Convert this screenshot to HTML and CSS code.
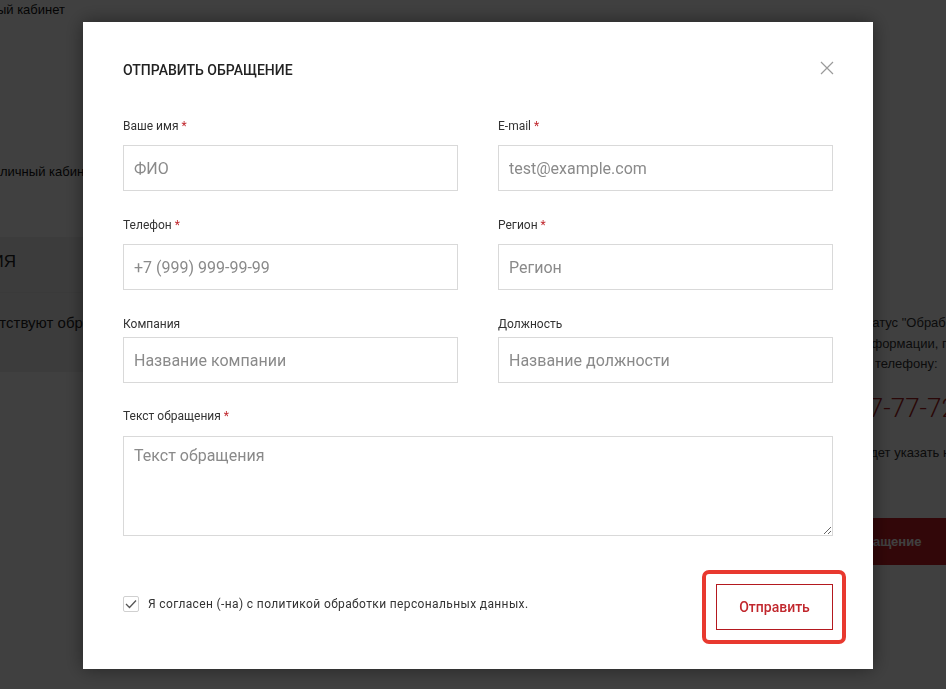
FILE: index.html
```html
<!DOCTYPE html>
<html lang="ru">
<head>
    <meta charset="UTF-8">
    <title>Отправить обращение</title>
    <link rel="stylesheet" href="styles.css">
</head>
<body>
    <div class="page">
        <div class="topbar">
            <div class="clip-left clip-top">Личный кабинет</div>
        </div>
        <div class="intro">личный кабинет</div>
        <div class="content">
            <div class="main">
                <div class="band-head">
                    <div class="clip-left clip-head">ОБРАЩЕНИЯ</div>
                </div>
                <div class="band-body">
                    <div class="clip-body"><span class="band-text">Отсутствуют обращения</span></div>
                </div>
            </div>
            <div class="aside">
                <p class="aside-line">Статус "Обработано" присваивается</p>
                <p class="aside-line">информации, пожалуйста,</p>
                <p class="aside-line">по телефону:</p>
                <p class="aside-phone">777-77-72</p>
                <p class="aside-note">будет указать номер обращения</p>
                <div class="aside-btn">обращение</div>
            </div>
        </div>
    </div>

    <div class="overlay">
        <div class="modal">
            <div class="modal-head">
                <div class="modal-title">Отправить обращение</div>
                <div class="modal-close">
                    <svg width="14" height="14" viewBox="0 0 14 14">
                        <path d="M1 1L13 13M13 1L1 13" stroke="#9a9a9a" stroke-width="1.2" fill="none"/>
                    </svg>
                </div>
            </div>

            <form class="form">
                <div class="field">
                    <label class="label">Ваше имя <span class="req">*</span></label>
                    <input class="input" type="text" placeholder="ФИО">
                </div>
                <div class="field">
                    <label class="label">E-mail <span class="req">*</span></label>
                    <input class="input" type="text" placeholder="test@example.com">
                </div>
                <div class="field">
                    <label class="label">Телефон <span class="req">*</span></label>
                    <input class="input" type="text" placeholder="+7 (999) 999-99-99">
                </div>
                <div class="field">
                    <label class="label">Регион <span class="req">*</span></label>
                    <input class="input" type="text" placeholder="Регион">
                </div>
                <div class="field field-short">
                    <label class="label">Компания</label>
                    <input class="input" type="text" placeholder="Название компании">
                </div>
                <div class="field field-short">
                    <label class="label">Должность</label>
                    <input class="input" type="text" placeholder="Название должности">
                </div>
                <div class="field field-wide">
                    <label class="label">Текст обращения <span class="req">*</span></label>
                    <textarea class="textarea" placeholder="Текст обращения"></textarea>
                </div>

                <div class="form-foot">
                    <label class="agree">
                        <span class="check">
                            <svg width="12" height="10" viewBox="0 0 12 10">
                                <path d="M1 5L4.5 8.5L11 1.5" stroke="#555" stroke-width="1.3" fill="none"/>
                            </svg>
                        </span>
                        Я согласен (-на) с политикой обработки персональных данных.
                    </label>
                    <div class="highlight">
                        <button class="submit" type="button">Отправить</button>
                    </div>
                </div>
            </form>
        </div>
    </div>
</body>
</html>
```

FILE: styles.css
```css
*{
    padding: 0;
    margin: 0;
    box-sizing: border-box;
}
html, body{
    height: 100%;
    overflow: hidden;
}
body{
    font-family: Roboto, "Noto Sans", sans-serif;
    color: #333;
    background: #fff;
}

/* page under the overlay */
.page{
    font-family: "Liberation Sans", Arial, sans-serif;
}
.topbar{
    height: 20px;
}
.clip-left{
    display: flex;
    justify-content: flex-end;
    overflow: hidden;
    white-space: nowrap;
}
.clip-top{
    width: 65px;
    font-size: 13px;
    line-height: 20px;
    color: #111;
}
.intro{
    margin-top: 142px;
    font-size: 13px;
    line-height: 20px;
    color: #111;
    white-space: nowrap;
}
.content{
    display: flex;
    align-items: flex-start;
    margin-top: 55px;
}
.main{
    width: 857px;
    flex-shrink: 0;
    background: #f0f0f0;
}
.band-head{
    height: 56px;
    display: flex;
    align-items: center;
    border-bottom: 1px solid #e8e8e8;
    padding-bottom: 6px;
}
.clip-head{
    width: 16px;
    font-size: 17px;
    color: #222;
}
.band-body{
    height: 79px;
    padding-top: 21px;
}
.clip-body{
    width: 83px;
    overflow: hidden;
    white-space: nowrap;
    font-size: 15px;
    color: #222;
}
.band-text{
    display: inline-block;
    margin-left: -34px;
}
.aside{
    white-space: nowrap;
    padding-top: 76px;
    font-size: 13px;
    color: #333;
}
.aside-line{
    line-height: 20.5px;
}
.aside-phone{
    margin-top: 16px;
    margin-left: -17px;
    font-family: Roboto, sans-serif;
    font-weight: 300;
    font-size: 26px;
    line-height: 34px;
    color: #a81c20;
}
.aside-note{
    margin-top: 18px;
    line-height: 20px;
}
.aside-btn{
    margin-top: 55px;
    margin-left: -20px;
    height: 47px;
    width: 200px;
    padding-left: 12px;
    background: #c81d24;
    color: #fff;
    font-weight: bold;
    font-size: 13px;
    line-height: 47px;
}

/* overlay and modal */
.overlay{
    position: fixed;
    top: 0;
    left: 0;
    right: 0;
    bottom: 0;
    background: rgba(0,0,0,.75);
    padding: 22px 0 0 83px;
}
.modal{
    width: 790px;
    height: 647px;
    background: #fff;
    padding: 38px 40px 25px;
    box-shadow: 0 0 18px rgba(0,0,0,.45);
}
.modal-head{
    display: flex;
    justify-content: space-between;
    align-items: center;
    margin-bottom: 38px;
}
.modal-title{
    font-size: 14px;
    line-height: 20px;
    font-weight: 500;
    text-transform: uppercase;
    color: #222;
}
.modal-close{
    width: 14px;
    height: 14px;
    margin-right: -1px;
    margin-top: -4px;
    cursor: pointer;
}
.modal-close svg{
    display: block;
}

.form{
    display: grid;
    grid-template-columns: 1fr 1fr;
    column-gap: 40px;
}
.field{
    display: flex;
    flex-direction: column;
    margin-bottom: 26px;
}
.field-short{
    margin-bottom: 25px;
}
.field-wide{
    grid-column: 1 / 3;
    margin-bottom: 34px;
}
.label{
    font-size: 12px;
    line-height: 16px;
    color: #333;
    margin-bottom: 11px;
}
.field-short .label{
    margin-bottom: 5px;
}
.field-wide .label{
    margin-bottom: 12px;
}
.req{
    color: #c0272d;
}
.input, .textarea{
    width: 100%;
    border: 1px solid #d9d9d9;
    font-family: Roboto, sans-serif;
    font-size: 16px;
    color: #333;
    background: #fff;
    outline: none;
}
.input{
    height: 46px;
    padding: 0 10px;
}
.textarea{
    height: 100px;
    padding: 9px 10px;
    line-height: 20px;
    resize: vertical;
}
.input::placeholder, .textarea::placeholder{
    color: #8a8a8a;
}

.form-foot{
    grid-column: 1 / 3;
    display: flex;
    justify-content: space-between;
    align-items: center;
}
.agree{
    display: flex;
    align-items: center;
    gap: 9px;
    font-size: 12px;
    letter-spacing: .37px;
    color: #333;
    margin-bottom: 6px;
    cursor: pointer;
}
.check{
    width: 16px;
    height: 16px;
    border: 1px solid #d0d0d0;
    border-radius: 2px;
    display: flex;
    align-items: center;
    justify-content: center;
}
.check svg{
    display: block;
}
.highlight{
    border: 4px solid #e8392f;
    border-radius: 7px;
    padding: 10px 9px 10px 10px;
    margin-right: -13px;
}
.submit{
    display: block;
    width: 117px;
    height: 46px;
    border: 1px solid #b4191f;
    background: #fff;
    color: #c1272d;
    font-family: Roboto, sans-serif;
    font-size: 14px;
    font-weight: 500;
    cursor: pointer;
}
```
